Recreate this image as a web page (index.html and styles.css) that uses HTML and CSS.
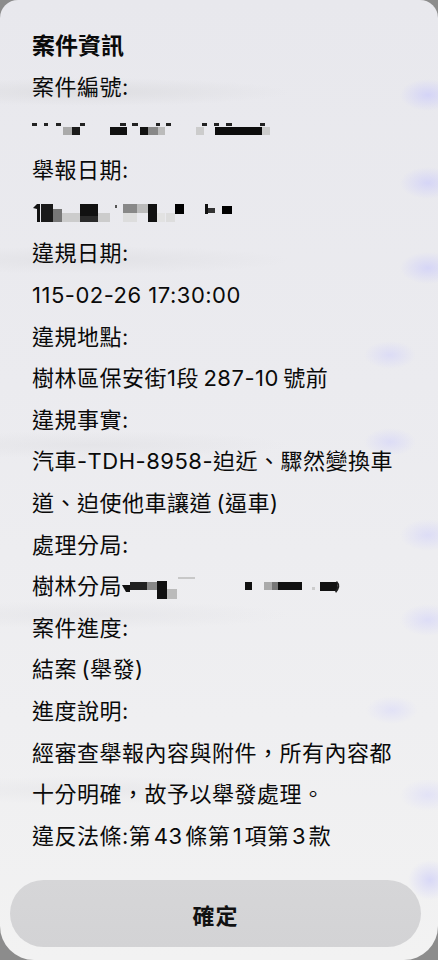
FILE: index.html
```html
<!DOCTYPE html>
<html lang="zh-Hant">
<head>
<meta charset="utf-8">
<title>案件資訊</title>
<link rel="stylesheet" href="styles.css">
</head>
<body>
<div class="sheet">
  <div class="content">
    <div class="title">案件資訊</div>
    <div class="line">案件編號:</div>
    <div class="line mask">
      <svg width="260" height="42" viewBox="0 0 260 42">
        <g fill="#222">
          <rect x="0" y="14" width="5" height="3"/><rect x="12" y="14" width="4" height="3"/><rect x="24" y="14" width="5" height="3"/>
          <rect x="48" y="14" width="5" height="3"/><rect x="88" y="14" width="6" height="3"/><rect x="100" y="14" width="6" height="3"/>
          <rect x="124" y="14" width="4" height="3"/><rect x="134" y="14" width="5" height="3"/><rect x="170" y="14" width="5" height="3"/>
          <rect x="182" y="14" width="5" height="3"/><rect x="194" y="14" width="6" height="3"/><rect x="228" y="14" width="5" height="3"/>
        </g>
        <rect x="31" y="18" width="9" height="8" fill="#aaa"/>
        <rect x="40" y="18" width="8" height="8" fill="#1a1a1a"/>
        <rect x="78" y="18" width="17" height="8" fill="#111"/>
        <rect x="108" y="18" width="8" height="8" fill="#111"/>
        <rect x="116" y="18" width="10" height="8" fill="#888"/>
        <rect x="126" y="18" width="7" height="8" fill="#bbb"/>
        <rect x="164" y="18" width="8" height="8" fill="#ccc"/>
        <rect x="183" y="18" width="47" height="8" fill="#0d0d0d"/>
        <rect x="230" y="18" width="8" height="8" fill="#ccc"/>
      </svg>
    </div>
    <div class="line">舉報日期:</div>
    <div class="line mask">
      <svg width="240" height="42" viewBox="0 0 240 42">
        <path d="M1 16 L5 12 L8 12 L8 30 L5 30 L5 17 Z" fill="#111"/>
        <rect x="9" y="12" width="12" height="18" fill="#1a1a1a"/>
        <rect x="21" y="17" width="9" height="13" fill="#777"/>
        <rect x="30" y="21" width="18" height="9" fill="#ccc"/>
        <rect x="48" y="12" width="18" height="12" fill="#111"/>
        <rect x="48" y="24" width="18" height="6" fill="#2a2a2a"/>
        <rect x="66" y="21" width="12" height="9" fill="#ccc"/>
        <rect x="83" y="13" width="2" height="3" fill="#555"/>
        <rect x="91" y="12" width="14" height="9" fill="#888"/>
        <rect x="91" y="21" width="14" height="9" fill="#ddd"/>
        <rect x="105" y="12" width="11" height="9" fill="#bbb"/>
        <rect x="116" y="12" width="9" height="18" fill="#111"/>
        <rect x="125" y="21" width="8" height="9" fill="#e2e2e2"/>
        <rect x="134" y="21" width="9" height="9" fill="#ddd"/>
        <rect x="143" y="12" width="9" height="10" fill="#000"/>
        <rect x="173" y="12" width="3" height="10" fill="#111"/>
        <rect x="176" y="16" width="7" height="5" fill="#333"/>
        <rect x="190" y="14" width="10" height="8" fill="#000"/>
      </svg>
    </div>
    <div class="line">違規日期:</div>
    <div class="line">115-02-26 17:30:00</div>
    <div class="line">違規地點:</div>
    <div class="line">樹林區保安街1段&#8201;287-10&#8201;號前</div>
    <div class="line">違規事實:</div>
    <div class="line">汽車-TDH-8958-迫近、驟然變換車</div>
    <div class="line">道、迫使他車讓道&#8201;(逼車)</div>
    <div class="line">處理分局:</div>
    <div class="line">樹林分局<svg class="inline-mask" width="230" height="42" viewBox="0 0 230 42">
        <path d="M0 19 L8 19 L8 26 L4 26 Z" fill="#111"/>
        <rect x="8" y="16" width="17" height="8" fill="#222"/>
        <rect x="25" y="16" width="10" height="8" fill="#888"/>
        <rect x="35" y="15" width="10" height="18" fill="#111"/>
        <rect x="45" y="23" width="10" height="10" fill="#bbb"/>
        <rect x="56" y="11" width="17" height="2" fill="#c8c8c8"/>
        <rect x="123" y="16" width="7" height="8" fill="#111"/>
        <rect x="142" y="16" width="8" height="8" fill="#aaa"/>
        <rect x="150" y="16" width="6" height="8" fill="#777"/>
        <rect x="156" y="16" width="24" height="8" fill="#111"/>
        <rect x="190" y="21" width="3" height="3" fill="#ccc"/>
        <rect x="198" y="16" width="17" height="9" fill="#111"/>
        <path d="M215 15 Q220 20 214 27 L213 25 Q217 20 214 16 Z" fill="#222"/>
      </svg></div>
    <div class="line">案件進度:</div>
    <div class="line">結案&#8201;(舉發)</div>
    <div class="line">進度說明:</div>
    <div class="line">經審查舉報內容與附件，所有內容都</div>
    <div class="line">十分明確，故予以舉發處理。</div>
    <div class="line">違反法條:第&#8202;43&#8202;條第&#8202;1&#8202;項第&#8202;3&#8202;款</div>
  </div>
  <div class="actions">
    <button class="confirm" type="button">確定</button>
  </div>
</div>
</body>
</html>
```

FILE: styles.css
```css
html, body {
  margin: 0;
  padding: 0;
}

body {
  width: 438px;
  height: 960px;
  overflow: hidden;
  background: #8c8c8c;
  font-family: "Inter", "Noto Sans CJK TC", "Noto Sans", sans-serif;
  color: #0a0a0a;
}

.sheet {
  height: 960px;
  box-sizing: border-box;
  border-radius: 18px 18px 34px 34px;
  display: flex;
  flex-direction: column;
  background:
    radial-gradient(ellipse 28px 16px at 428px 95px, rgba(205, 205, 250, 0.75), rgba(205, 205, 250, 0)),
    radial-gradient(ellipse 28px 16px at 428px 183px, rgba(205, 205, 250, 0.7), rgba(205, 205, 250, 0)),
    radial-gradient(ellipse 28px 16px at 428px 268px, rgba(205, 205, 250, 0.7), rgba(205, 205, 250, 0)),
    radial-gradient(ellipse 26px 14px at 390px 355px, rgba(210, 210, 250, 0.6), rgba(210, 210, 250, 0)),
    radial-gradient(ellipse 26px 14px at 390px 442px, rgba(210, 210, 250, 0.6), rgba(210, 210, 250, 0)),
    radial-gradient(ellipse 28px 16px at 428px 535px, rgba(210, 210, 250, 0.6), rgba(210, 210, 250, 0)),
    radial-gradient(ellipse 28px 16px at 428px 620px, rgba(210, 210, 250, 0.6), rgba(210, 210, 250, 0)),
    radial-gradient(ellipse 26px 14px at 392px 710px, rgba(215, 215, 250, 0.55), rgba(215, 215, 250, 0)),
    radial-gradient(ellipse 28px 16px at 428px 795px, rgba(215, 215, 250, 0.55), rgba(215, 215, 250, 0)),
    radial-gradient(ellipse 22px 20px at 430px 880px, rgba(200, 200, 250, 0.6), rgba(200, 200, 250, 0)),
    radial-gradient(ellipse 200px 14px at 90px 92px, rgba(215, 215, 218, 0.6), rgba(215, 215, 218, 0)),
    radial-gradient(ellipse 200px 14px at 90px 260px, rgba(218, 218, 222, 0.5), rgba(218, 218, 222, 0)),
    radial-gradient(ellipse 200px 14px at 90px 445px, rgba(220, 220, 224, 0.45), rgba(220, 220, 224, 0)),
    radial-gradient(ellipse 200px 14px at 90px 615px, rgba(222, 222, 226, 0.45), rgba(222, 222, 226, 0)),
    radial-gradient(ellipse 200px 14px at 90px 790px, rgba(224, 224, 228, 0.45), rgba(224, 224, 228, 0)),
    linear-gradient(180deg, #e8e8ed 0%, #ebebef 40%, #efeff1 75%, #f2f2f2 100%);
}

.content {
  padding: 25px 0 0 32px;
  flex: 1;
}

.title {
  font-size: 23px;
  font-weight: 700;
  line-height: 42px;
  height: 42px;
}

.line {
  font-size: 22px;
  letter-spacing: 0.5px;
  line-height: 41.6px;
  height: 41.6px;
  white-space: nowrap;
}

.mask svg,
.inline-mask {
  display: inline-block;
  vertical-align: top;
}

.actions {
  padding: 0 17px 13px 10px;
}

.confirm {
  display: block;
  width: 100%;
  height: 67px;
  border: none;
  border-radius: 34px;
  background: linear-gradient(180deg, #d6d6d8 0%, #d3d3d5 100%);
  font-family: "Inter", "Noto Sans CJK TC", sans-serif;
  font-size: 22px;
  font-weight: 700;
  color: #111;
  letter-spacing: 1px;
  padding: 0;
}
```
